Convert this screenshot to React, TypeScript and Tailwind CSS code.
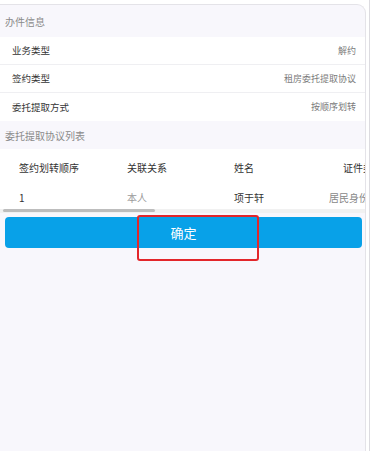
const rows = [
  { label: "业务类型", value: "解约" },
  { label: "签约类型", value: "租房委托提取协议" },
  { label: "委托提取方式", value: "按顺序划转" },
];

const App = () => {
  return (
    <div
      className="relative h-[451px] w-[371px] overflow-hidden bg-white"
      style={{ fontFamily: '"Noto Sans CJK SC", "Noto Sans", sans-serif' }}
    >
      <div className="flex h-full w-[370px] border-r border-[#dcdbe0]">
        {/* Card */}
        <div className="mt-[4px] flex h-[460px] w-[366px] flex-col rounded-tr-[9px] border-t border-r border-[#e4e3e8] bg-[#f8f7fc]">
          {/* Header */}
          <div className="flex h-[32px] items-center pl-[5px] text-[10px] text-[#8a8a8a]">
            办件信息
          </div>

          {/* Info rows */}
          <div className="bg-white">
            {rows.map((row, i) => (
              <div
                key={row.label}
                className={`flex h-[28px] items-center justify-between pl-[12px] pr-[9px] ${
                  i < rows.length - 1 ? "border-b border-[#efeff2]" : ""
                }`}
              >
                <span className="text-[9.5px] text-[#333]">{row.label}</span>
                <span className="text-[9px] text-[#7a7a7a]">{row.value}</span>
              </div>
            ))}
          </div>

          {/* Section title */}
          <div className="flex h-[28px] items-center pl-[5px] text-[10px] text-[#8a8a8a]">
            委托提取协议列表
          </div>

          <div className="overflow-hidden bg-white">
            <div className="flex h-[36px] items-center pt-[1px] text-[10px] text-[#333]">
              <div className="w-[107px] shrink-0 pl-[19px]">签约划转顺序</div>
              <div className="w-[107px] shrink-0 pl-[20px]">关联关系</div>
              <div className="w-[109px] shrink-0 pl-[20px]">姓名</div>
              <div className="shrink-0 whitespace-nowrap pl-[20px]">证件类型</div>
            </div>
            <div className="flex h-[24px] items-center text-[10px]">
              <div className="w-[107px] shrink-0 pl-[19px] text-[#333]">1</div>
              <div className="w-[107px] shrink-0 pl-[20px] text-[#9a9a9a]">本人</div>
              <div className="w-[115px] shrink-0 pl-[20px] text-[#333]">项于轩</div>
              <div className="shrink-0 whitespace-nowrap text-[#888]">居民身份证</div>
            </div>
            {/* Scrollbar */}
            <div className="h-[4px] bg-[#f1f1f1]">
              <div className="ml-[3px] h-[3px] w-[152px] rounded-sm bg-[#bdbdbd]" />
            </div>
          </div>

          {/* Button */}
          <div className="bg-[#f8f7fc] pl-[5px] pt-[4px]">
            <button
              type="button"
              className="flex h-[31px] w-[357px] items-center justify-center rounded-[4px] bg-[#08a1e8] text-[13px] text-white"
            >
              确定
            </button>
          </div>
        </div>
      </div>

      {/* Red annotation */}
      <div className="absolute left-[137px] top-[215px] h-[46px] w-[122px] rounded-[3px] border-2 border-[#e3262a]" />
    </div>
  );
};

export default App;
